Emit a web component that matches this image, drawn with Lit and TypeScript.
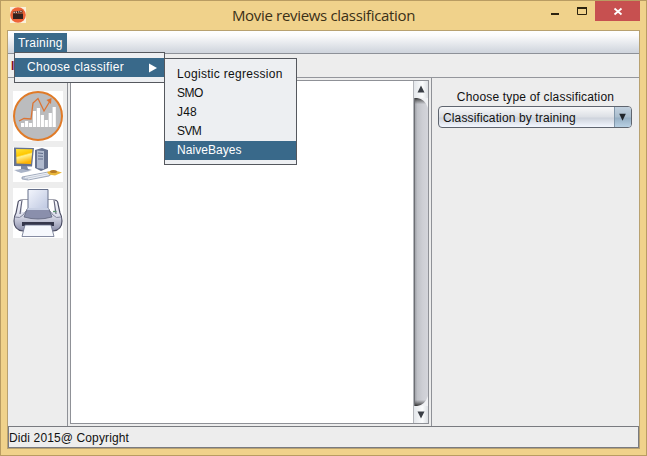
import { LitElement, html, css, svg } from "lit";
import { customElement, property, state } from "lit/decorators.js";
import { classMap } from "lit/directives/class-map.js";

const CLASSIFIERS = [
  { name: "Logistic regression", spacing: 0.3 },
  { name: "SMO", spacing: -0.5 },
  { name: "J48", spacing: 0.2 },
  { name: "SVM", spacing: -0.6 },
  { name: "NaiveBayes", spacing: 0.05 },
];

@customElement("window-titlebar")
class WindowTitlebar extends LitElement {
  @property() heading = "";
  static styles = css`
    :host { display: grid; grid-template-columns: 1fr; height: 29px; color: #3b3017; }
    .row, h1 { grid-area: 1 / 1; }
    .row { display: flex; justify-content: space-between; align-items: flex-start; }
    h1 { margin: 0; padding: 4px 0 0; text-align: center; font: 400 15px/20px "Open Sans", "Noto Sans", sans-serif; letter-spacing: -0.32px; }
    .logo { margin: 6px 0 0 9px; }
    .buttons { margin-right: 6px; }
    svg { display: block; }
  `;
  render() {
    return html`
      <div class="row">
        <svg class="logo" width="16" height="16" viewBox="0 0 16 16">
          <rect width="16" height="16" fill="#faf1dc" />
          <circle cx="8" cy="8" r="7.8" fill="#ee6438" />
          <path d="M3 6.500h10V12H3z" fill="#33221e" />
          <path d="m3 5.800 9.500-1.300" stroke="#33221e" stroke-width="2" />
          <path d="m3.500 5.600 9-1.200" stroke="#ffd9c9" stroke-width="1.2" stroke-dasharray="1.3 1" />
        </svg>
        <svg class="buttons" width="96" height="20" viewBox="0 0 96 20">
          <path d="M7 13h8" stroke="#2c230f" stroke-width="2" />
          <path d="M33.500 6.500h9v7h-9z" fill="none" stroke="#2c230f" />
          <path d="M33 7h10" stroke="#2c230f" stroke-width="2" />
          <rect x="51" y="0" width="45" height="20" fill="#c75050" />
          <path d="m70.500 7.500 7 6m0-6-7 6" stroke="#fff" stroke-width="1.800" />
        </svg>
      </div>
      <h1>${this.heading}</h1>
    `;
  }
}

@customElement("tool-strip")
class ToolStrip extends LitElement {
  static styles = css`
    :host { display: flex; flex-direction: column; align-items: flex-start; gap: 6px; padding: 13px 0 0 5px; }
    svg { display: block; background: #fff; }
  `;
  render() {
    const bars = [4, 6, 4, 16, 19, 12, 7, 14, 20];
    return html`
      <svg width="50" height="50" viewBox="0 0 50 50">
        <circle cx="25" cy="25" r="24" fill="#bbbcbe" stroke="#e07b28" stroke-width="2" />
        ${bars.map((h, i) => svg`<rect x=${8 + i * 3.95} y=${36 - h} width="3.200" height=${h} fill="#fff" />`)}
        <path d="m6 30 5-2.500 7 .5 2-16 5-4.500 6 12.500 6-10" fill="none" stroke="#dc7434" stroke-width="1.300" />
        <path d="m33.500 9 5-2-.5 6z" fill="#dc7434" />
      </svg>
      <svg width="50" height="35" viewBox="0 0 50 35">
        <defs>
          <linearGradient id="screen" x2=".3" y2="1"><stop stop-color="#ffe33b" /><stop offset=".45" stop-color="#ffc800" /><stop offset=".55" stop-color="#fff08c" /><stop offset="1" stop-color="#ffb300" /></linearGradient>
        </defs>
        <path d="m22 3 7-2 6 2v18l-7 3-6-3z" fill="#66728e" />
        <path d="m24 3.500 7 .5v18l-7-1z" fill="#b0bace" />
        <path d="m25 6 5 .5m-5 2.500 5 .3m-5 2.700h5" stroke="#606d8b" />
        <path d="m1 .500 20 .5-2 18.500-18-.5z" fill="#67738f" />
        <path d="m3 2 16.500.3-1.500 14.700-14.500-.5z" fill="url(#screen)" />
        <path d="M8 19h6l1 3 4 1-10 2-6-1 5-2z" fill="#7c88a2" />
        <path d="m1 23 9-1 7 2-9 2z" fill="#a9b3c7" />
        <path d="m9 30 26-5 4 1.500-3 2.500-21 4-6-1z" fill="#c5ccda" stroke="#8590a7" stroke-width=".7" />
        <path d="m12 30.500 23-4.500m-20 6 21-4.500" stroke="#edf0f5" />
        <path d="m34 25 6-2 9 2.500-7 3-6-1z" fill="#e9b63a" />
        <ellipse cx="40.500" cy="24.500" rx="3.500" ry="1.600" fill="#b67a25" />
      </svg>
      <svg width="50" height="50" viewBox="0 0 50 50">
        <defs>
          <linearGradient id="paper" x2="1" y2="1"><stop stop-color="#f6f8fe" /><stop offset="1" stop-color="#b4bfdc" /></linearGradient>
          <linearGradient id="body" x2="0" y2="1"><stop stop-color="#fafaff" /><stop offset=".5" stop-color="#dcdeeb" /><stop offset="1" stop-color="#8b8ea9" /></linearGradient>
        </defs>
        <path d="M5 15q0-3 4-3h32q4 0 4 4l2 9q2 3 2 8 0 9-9 10H10q-9-1-9-10 0-5 2-8z" fill="url(#body)" stroke="#4c4e64" stroke-width="1.200" />
        <path d="M8 12h34l-1 12H9z" fill="#fff" />
        <path d="M9 12 7 26M41 12l2 14" stroke="#65677d" stroke-width="1.200" />
        <path d="M2 29q5 2 8-2l3-4h24l3 4q3 4 8 2" fill="none" stroke="#85889f" />
        <path d="M15 1.500h20v20l2 4H13l2-4z" fill="url(#paper)" stroke="#66708b" />
        <path d="M14 21h22l3 8q-14 4-28 0z" fill="#8a8fac" stroke="#555a73" stroke-width=".7" />
        <path d="M15 20h20l1 2H14z" fill="#c8d0e4" />
        <path d="M9 34h32v4H9z" fill="#35374b" />
        <path d="M12 37h26l3 11.500H9z" fill="#f6f8fd" stroke="#68708a" stroke-width=".8" />
        <path d="M40 23.500h3.500" stroke="#5b936e" stroke-width="1.300" />
      </svg>
    `;
  }
}

@customElement("scroll-track")
class ScrollTrack extends LitElement {
  static styles = css`
    :host { display: flex; flex-direction: column; width: 15px; background: #f0f1f4; border-left: 1px solid #b4b6bb; box-sizing: border-box; }
    .end { height: 17px; flex: none; background: linear-gradient(90deg, #e4e7eb, #fbfcfd 60%, #dde0e4); }
    .track { flex: 1; min-height: 0; }
    svg { display: block; width: 100%; height: 100%; }
  `;
  render() {
    return html`
      <div class="end"><svg viewBox="0 0 14 17"><path d="m3.500 11.500 3.500-7 3.500 7z" fill="#3b3f46" /></svg></div>
      <div class="track">
        <svg viewBox="0 0 14 308" preserveAspectRatio="none">
          <defs>
            <linearGradient id="t"><stop stop-color="#96989e" /><stop offset=".25" stop-color="#bfc1c7" /><stop offset=".6" stop-color="#cdced4" /><stop offset="1" stop-color="#d4d5db" /></linearGradient>
            <linearGradient id="v" x2="0" y2="1"><stop stop-color="#222" stop-opacity=".85" /><stop offset=".02" stop-color="#444" stop-opacity="0" /><stop offset=".98" stop-color="#444" stop-opacity="0" /><stop offset="1" stop-color="#222" stop-opacity=".9" /></linearGradient>
          </defs>
          <path d="M0 0h3q8 1 11 10v288q-3 9-11 10H0z" fill="url(#t)" />
          <path d="M0 0h3q8 1 11 10v288q-3 9-11 10H0z" fill="url(#v)" />
          <path d="M.5 0v308" stroke="#6c6e73" />
        </svg>
      </div>
      <div class="end"><svg viewBox="0 0 14 17"><path d="m3.500 5.500 3.500 7 3.500-7z" fill="#3b3f46" /></svg></div>
    `;
  }
}

@customElement("app-root")
class AppRoot extends LitElement {
  @state() private selected = "NaiveBayes";

  static styles = css`
    :host { display: block; width: 647px; height: 456px; font: 12px/15px "Liberation Sans", Arial, sans-serif; color: #111; }
    * { box-sizing: border-box; }
    .window { position: relative; height: 456px; display: flex; flex-direction: column; background: #f0d28b; border: 1px solid #b99c62; overflow: hidden; }
    .client { flex: 1; margin: 0 6px 6px; border: 1px solid #b8a170; display: flex; flex-direction: column; background: #ededed; min-height: 0; }
    .menubar { height: 23px; padding: 2px 0 0 6px; background: linear-gradient(#fff, #fbfbfc 20%, #d1d6de 95%); border-bottom: 1px solid #8d9198; }
    .menu { display: block; width: 53px; height: 20px; padding: 3px 0 0 4px; background: #39698a; color: #fff; letter-spacing: .22px; }
    .toolbar { height: 24px; padding: 5px 0 0 3px; border-bottom: 1px solid #94969c; color: #811226; font-weight: bold; }
    .main { flex: 1; display: flex; min-height: 0; }
    tool-strip { width: 60px; border-right: 1px solid #8f9197; }
    .editor { flex: none; width: 364px; padding: 2px; border-right: 1px solid #8f9197; }
    .sheet { height: 100%; display: flex; justify-content: flex-end; background: #fff; border: 1px solid #8f9197; }
    .side { flex: 1; padding: 12px 6px 0; }
    .side label { display: block; height: 16px; text-align: center; letter-spacing: .18px; }
    .combo { display: flex; height: 22px; width: 194px; border: 1px solid #5f656f; border-radius: 4px; overflow: hidden; background: linear-gradient(#f8f8f9, #dcdfe5 50%, #ced3dc 55%, #f3f7ff); letter-spacing: .13px; }
    .combo span { flex: 1; padding: 4px 0 0 4px; white-space: nowrap; }
    .drop { width: 17px; background: linear-gradient(#c2d1df, #a9bdcd 50%, #96afc4 55%, #b8d0e3); border-left: 1px solid #8297aa; }
    .status { height: 22px; padding: 4px 0 0; border: 1px solid #797b80; letter-spacing: .12px; white-space: nowrap; }
    .popup { position: absolute; background: #edeff2; border: 1px solid #55585e; }
    .first { left: 13px; top: 51px; width: 151px; height: 31px; padding-top: 5px; }
    .second { left: 163px; top: 57px; width: 133px; height: 107px; padding-top: 6px; }
    .item { height: 19px; padding: 2px 0 0 12px; white-space: nowrap; }
    .item.on { background: #39698a; color: #fff; }
    .parent { display: flex; justify-content: space-between; padding-right: 7px; letter-spacing: .33px; }
    svg { display: block; }
  `;

  render() {
    return html`
      <div class="window">
        <window-titlebar heading="Movie reviews classification"></window-titlebar>
        <div class="client">
          <div class="menubar"><span class="menu">Training</span></div>
          <div class="toolbar">I</div>
          <div class="main">
            <tool-strip></tool-strip>
            <div class="editor"><div class="sheet"><scroll-track></scroll-track></div></div>
            <div class="side">
              <label>Choose type of classification</label>
              <div class="combo">
                <span>Classification by training</span>
                <svg class="drop" viewBox="0 0 17 20"><path d="m4.500 6.500 3.500 7.500 3.500-7.500z" fill="#20252b" /></svg>
              </div>
            </div>
          </div>
          <div class="status">Didi 2015@ Copyright</div>
        </div>
        <div class="popup first">
          <div class="item on parent">Choose classifier
            <svg width="8" height="15" viewBox="0 0 8 15"><path d="m0 3.500 8 4.500-8 4.500z" fill="#fff" /></svg>
          </div>
        </div>
        <div class="popup second">
          ${CLASSIFIERS.map((c) => html`
            <div
              class=${classMap({ item: true, on: c.name === this.selected })}
              style="letter-spacing:${c.spacing}px"
              @click=${() => (this.selected = c.name)}
            >${c.name}</div>`)}
        </div>
      </div>
    `;
  }
}
